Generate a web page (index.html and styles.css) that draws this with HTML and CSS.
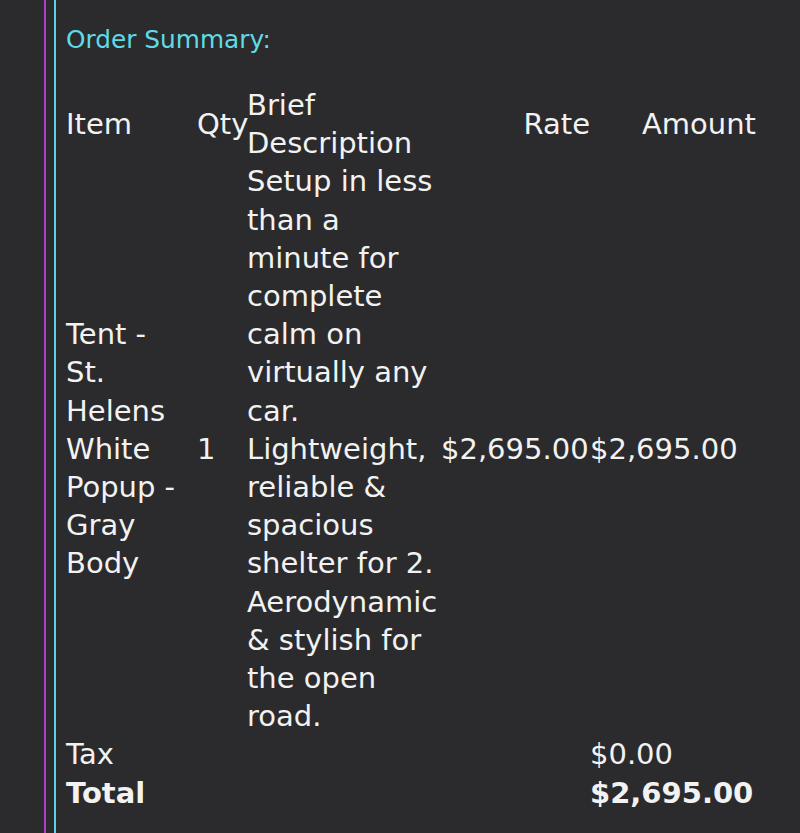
FILE: index.html
```html
<!DOCTYPE html>
<html lang="en">
<head>
  <meta charset="UTF-8">
  <meta name="viewport" content="width=device-width, initial-scale=1.0">
  <title>Order Summary</title>
  <link rel="stylesheet" href="styles.css">
</head>
<body>
  <div class="outer">
    <div class="inner">
      <h3 class="title">Order Summary:</h3>

      <table class="summary">
        <colgroup>
          <col class="c-item">
          <col class="c-qty">
          <col class="c-desc">
          <col class="c-rate">
          <col class="c-amount">
        </colgroup>
        <tr>
          <th class="left">Item</th>
          <th class="left">Qty</th>
          <th class="left">Brief Description</th>
          <th>Rate</th>
          <th>Amount</th>
        </tr>
        <tr>
          <td class="item">Tent - St. Helens White Popup - Gray Body</td>
          <td>1</td>
          <td>Setup in less than a minute for complete calm on virtually any car. Lightweight, reliable &amp; spacious shelter for 2. Aerodynamic &amp; stylish for the open road.</td>
          <td>$2,695.00</td>
          <td>$2,695.00</td>
        </tr>
        <tr>
          <td>Tax</td>
          <td></td>
          <td></td>
          <td></td>
          <td>$0.00</td>
        </tr>
        <tr class="total">
          <td>Total</td>
          <td></td>
          <td></td>
          <td></td>
          <td>$2,695.00</td>
        </tr>
      </table>
    </div>
  </div>
</body>
</html>
```

FILE: styles.css
```css
* {
  box-sizing: border-box;
}

body {
  margin: 0;
  background: #2b2b2d;
  color: #f2f2f2;
  font-family: 'DejaVu Sans', Verdana, sans-serif;
}

.outer {
  margin-left: 44px;
  padding-left: 8px;
  border-left: 2px solid #b23fcc;
  min-height: 100vh;
}

.inner {
  border-left: 2px solid #5ad4e0;
  padding-left: 10px;
  min-height: 100vh;
  padding-top: 25px;
}

.title {
  margin: 0 0 31px 0;
  font-size: 24.8px;
  line-height: 30px;
  font-weight: normal;
  color: #5fdbe6;
}

.summary {
  border-collapse: collapse;
  table-layout: fixed;
  width: 690px;
  font-size: 29px;
  line-height: 38.2px;
}

.summary th, .summary td {
  padding: 0;
  font-weight: normal;
  text-align: left;
  vertical-align: middle;
}

.summary td.item {
  padding-right: 12px;
}

.summary th {
  text-align: right;
}

.summary th.left {
  text-align: left;
}

.c-item { width: 131px; }
.c-qty { width: 50px; }
.c-desc { width: 194px; }
.c-rate { width: 149px; }
.c-amount { width: 166px; }

.total td {
  font-weight: bold;
}
```
